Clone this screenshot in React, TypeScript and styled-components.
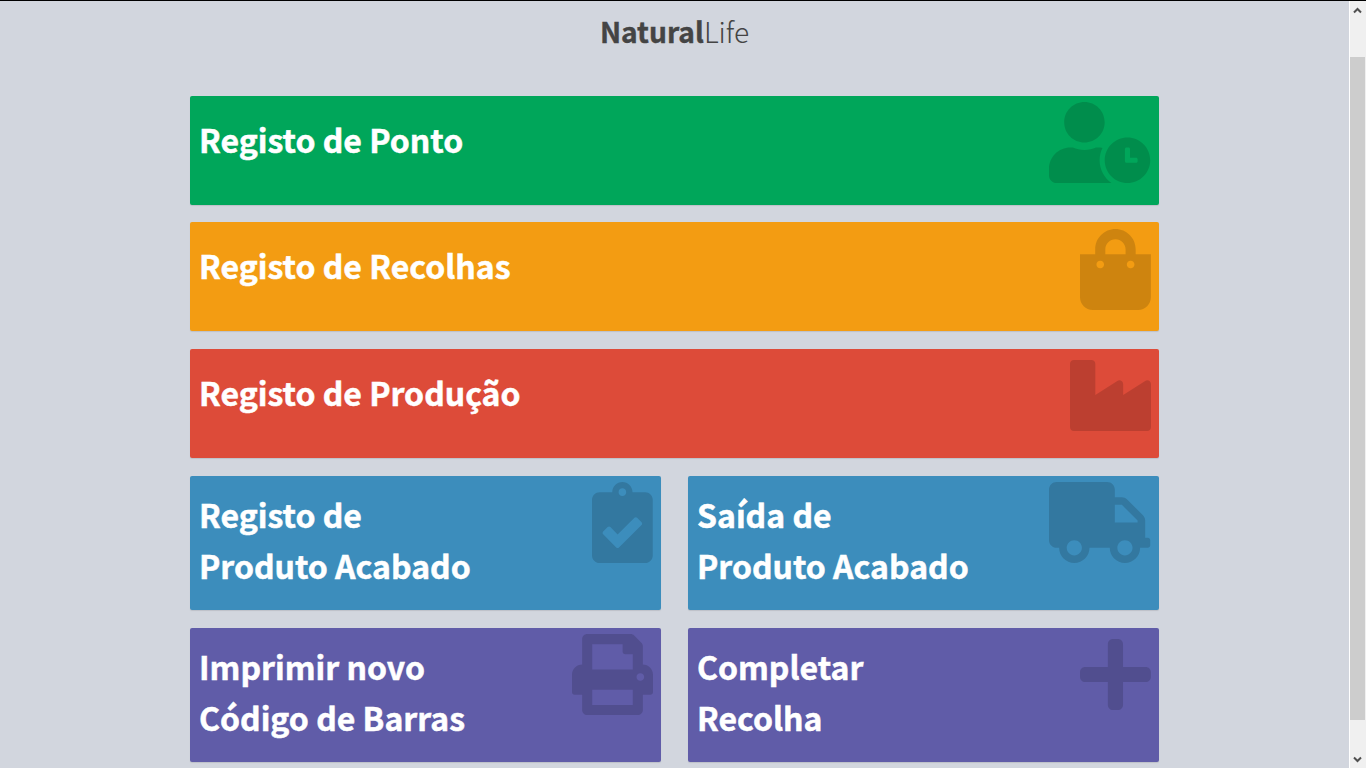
import React from 'react';
import styled, { createGlobalStyle } from 'styled-components';
import type { IconType } from 'react-icons';
import {
  FaUserClock,
  FaShoppingBag,
  FaIndustry,
  FaClipboardCheck,
  FaTruck,
  FaPrint,
  FaPlus,
} from 'react-icons/fa';

const GlobalStyle = createGlobalStyle`
  * { box-sizing: border-box; }
  body {
    margin: 0;
    background: #d2d6de;
    font-family: "Noto Sans CJK SC", "Noto Sans", sans-serif;
    overflow: hidden;
  }
`;

const Window = styled.div`
  display: flex;
  width: 1366px;
  height: 768px;
  border-top: 1px solid #000;
  overflow: hidden;
`;

const Page = styled.main`
  flex: 1;
  display: flex;
  flex-direction: column;
  align-items: center;
  background: #d2d6de;
`;

const Logo = styled.h1`
  flex: none;
  margin: 0;
  height: 95px;
  padding-top: 10px;
  font-size: 28.2px;
  line-height: 40px;
  font-weight: 300;
  color: #444;
  white-space: nowrap;
`;

const LogoStrong = styled.b`
  font-weight: 700;
  -webkit-text-stroke: 0.4px currentColor;
`;

const Menu = styled.nav`
  flex: none;
  width: 969px;
  display: flex;
  flex-direction: column;
`;

const Row = styled.div<{ $gap: number }>`
  display: flex;
  flex: none;
  gap: 27px;
  margin-bottom: ${(p) => p.$gap}px;
`;

const Tile = styled.a<{ $color: string; $tall?: boolean }>`
  flex: 1;
  display: flex;
  justify-content: space-between;
  height: ${(p) => (p.$tall ? 134 : 109)}px;
  padding: ${(p) => (p.$tall ? 13 : 18)}px 8.5px 0 9px;
  border-radius: 2px;
  background: ${(p) => p.$color};
  box-shadow: 0 1px 1px rgba(0, 0, 0, 0.1);
  color: #fff;
`;

const TileTitle = styled.h3`
  margin: 0;
  font-size: 32px;
  line-height: 51px;
  font-weight: 700;
  -webkit-text-stroke: 0.5px currentColor;
  white-space: pre-line;
`;

const TileIcon = styled.div<{ $tall?: boolean; $drop: number; $units: number }>`
  flex: none;
  margin-top: ${(p) => (p.$tall ? -7 : -12) + p.$drop}px;
  width: ${(p) => (p.$units / 512) * 81}px;
  height: 81px;
  color: rgba(0, 0, 0, 0.15);

  svg {
    display: block;
    height: 100%;
    width: 100%;
  }
`;

const ScrollTrack = styled.div`
  width: 17px;
  display: flex;
  flex-direction: column;
  align-items: center;
  background: #f0f0f0;
  border-left: 1px solid #fff;
  padding-right: 1px;
`;

const ScrollArrow = styled.svg`
  display: block;
  flex: none;
  width: 15px;
  height: 17px;
`;

const ScrollThumb = styled.div`
  width: 15px;
  height: 663px;
  margin-top: 39px;
  margin-bottom: 31px;
  flex: none;
  background: #cdcdcd;
`;

interface TileData {
  title: string;
  color: string;
  icon: IconType;
  units: number;
}

interface RowData {
  gap: number;
  tall?: boolean;
  drop?: number;
  tiles: TileData[];
}

const rows: RowData[] = [
  { gap: 17, tiles: [{ title: 'Registo de Ponto', color: '#00a65a', icon: FaUserClock, units: 640 }] },
  {
    gap: 18,
    drop: 1,
    tiles: [{ title: 'Registo de Recolhas', color: '#f39c12', icon: FaShoppingBag, units: 448 }],
  },
  { gap: 18, tiles: [{ title: 'Registo de Produção', color: '#dd4b39', icon: FaIndustry, units: 512 }] },
  {
    gap: 18,
    tall: true,
    tiles: [
      { title: 'Registo de\nProduto Acabado', color: '#3c8dbc', icon: FaClipboardCheck, units: 384 },
      { title: 'Saída de\nProduto Acabado', color: '#3c8dbc', icon: FaTruck, units: 640 },
    ],
  },
  {
    gap: 18,
    tall: true,
    tiles: [
      { title: 'Imprimir novo\nCódigo de Barras', color: '#605ca8', icon: FaPrint, units: 512 },
      { title: 'Completar\nRecolha', color: '#605ca8', icon: FaPlus, units: 448 },
    ],
  },
];

export default function App() {
  return (
    <>
      <GlobalStyle />
      <Window>
        <Page>
          <Logo>
            <LogoStrong>Natural</LogoStrong>Life
          </Logo>
          <Menu>
            {rows.map((row, i) => (
              <Row key={i} $gap={row.gap}>
                {row.tiles.map(({ title, color, icon: Icon, units }) => (
                  <Tile key={title} $color={color} $tall={row.tall}>
                    <TileTitle>{title}</TileTitle>
                    <TileIcon $tall={row.tall} $drop={row.drop ?? 0} $units={units}>
                      <Icon />
                    </TileIcon>
                  </Tile>
                ))}
              </Row>
            ))}
          </Menu>
        </Page>
        <ScrollTrack>
          <ScrollArrow viewBox="0 0 15 17">
            <path d="M4 11.5 L7.5 8 L11 11.5" fill="none" stroke="#505050" strokeWidth="2" />
          </ScrollArrow>
          <ScrollThumb />
          <ScrollArrow viewBox="0 0 15 17">
            <path d="M4 6.5 L7.5 10 L11 6.5" fill="none" stroke="#505050" strokeWidth="2" />
          </ScrollArrow>
        </ScrollTrack>
      </Window>
    </>
  );
}
